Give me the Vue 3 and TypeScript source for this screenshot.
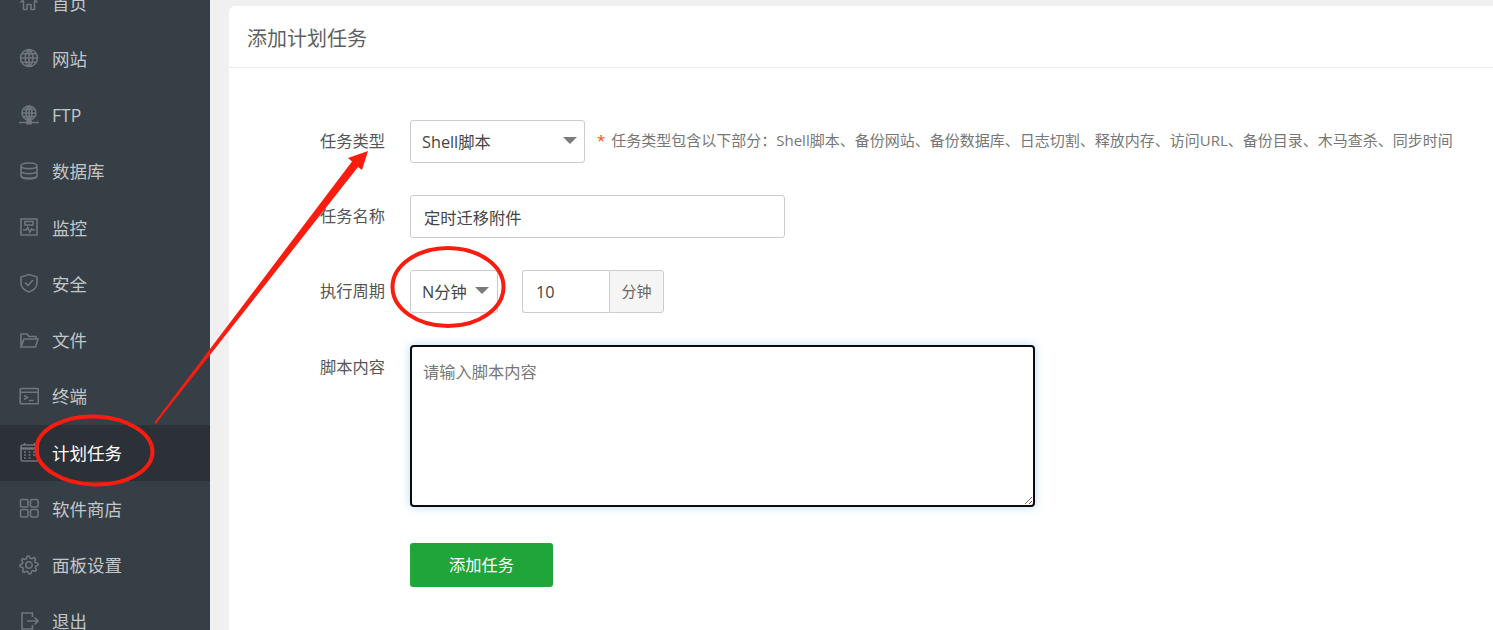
<script setup lang="ts">
const globe =
  'M10 1.5a8.5 8.5 0 1 0 0 17a8.5 8.5 0 1 0 0-17ZM1.5 10H18.5M10 1.5V18.5M3 5.8H17M3 14.2H17M10 1.5C5 5 5 15 10 18.5M10 1.5C15 5 15 15 10 18.5'

function gearPath(): string {
  const points: string[] = []
  const teeth = 8
  for (let i = 0; i < teeth * 4; i++) {
    const angle = (i / (teeth * 4)) * Math.PI * 2 - Math.PI / 16
    const radius = i % 4 < 2 ? 9 : 6.8
    points.push(`${(10 + Math.cos(angle) * radius).toFixed(2)} ${(10 + Math.sin(angle) * radius).toFixed(2)}`)
  }
  return `M${points.join('L')}ZM10 6.8a3.2 3.2 0 1 0 0 6.4a3.2 3.2 0 1 0 0-6.4Z`
}

const menu = [
  { label: '首页', icon: 'M1.5 10.5L10 2.5L18.5 10.5M4.5 8V17.5H8V12.5H12V17.5H15.5V8' },
  { label: '网站', icon: globe },
  {
    label: 'FTP',
    icon: 'M10 1a7 7 0 1 0 0 14a7 7 0 1 0 0-14ZM3 8H17M10 1V15M4.5 4.5H15.5M4.5 11.5H15.5M10 1C6 4 6 12 10 15M10 1C14 4 14 12 10 15M0 17.5H20M8 16.3H12V18.7H8Z',
  },
  {
    label: '数据库',
    icon: 'M2 5C2 1 18 1 18 5V15C18 19 2 19 2 15ZM2 5C2 8.5 18 8.5 18 5M2 10C2 13.5 18 13.5 18 10M2 14.5C2 18 18 18 18 14.5',
  },
  {
    label: '监控',
    icon: 'M2 2H18V18H2ZM6 4.5H14V8H6ZM4 13H7L8.8 10.5L10.8 15L12.8 12L14 13H16',
  },
  {
    label: '安全',
    icon: 'M10 1.5L18 4V10C18 15 14 17.5 10 19C6 17.5 2 15 2 10V4ZM6 9.5L9 12.5L14 7',
  },
  { label: '文件', icon: 'M2 17V4H8L10 6.5H17V9M2 17H16.5L19 9H5Z' },
  {
    label: '终端',
    icon: 'M2 2.5H18.5A.8.8 0 0 1 19.3 3.3V17A.8.8 0 0 1 18.5 17.8H2A.8.8 0 0 1 1.2 17V3.3A.8.8 0 0 1 2 2.5ZM1.2 6.3H19.3M5 9.5L8.5 11.5L5 13.5M10 14.5H14.5',
  },
  {
    label: '计划任务',
    icon: 'M3.5 3H17.5A1.5 1.5 0 0 1 19 4.5V17.5A1.5 1.5 0 0 1 17.5 19H3.5A1.5 1.5 0 0 1 2 17.5V4.5A1.5 1.5 0 0 1 3.5 3ZM2 6H19M2 7H19M5.5 1V3.5M15.5 1V3.5M5 10H7M9.5 10H11.5M14 10H16M5 13H7M9.5 13H11.5M14 13H16M5 16H7M9.5 16H11.5',
    active: true,
  },
  {
    label: '软件商店',
    icon: 'M3 1.5H7.5A1.5 1.5 0 0 1 9 3V7.5A1.5 1.5 0 0 1 7.5 9H3A1.5 1.5 0 0 1 1.5 7.5V3A1.5 1.5 0 0 1 3 1.5ZM13 1.5H17.5A1.5 1.5 0 0 1 19 3V7.5A1.5 1.5 0 0 1 17.5 9H13A1.5 1.5 0 0 1 11.5 7.5V3A1.5 1.5 0 0 1 13 1.5ZM3 11.5H7.5A1.5 1.5 0 0 1 9 13V17.5A1.5 1.5 0 0 1 7.5 19H3A1.5 1.5 0 0 1 1.5 17.5V13A1.5 1.5 0 0 1 3 11.5ZM13 11.5H17.5A1.5 1.5 0 0 1 19 13V17.5A1.5 1.5 0 0 1 17.5 19H13A1.5 1.5 0 0 1 11.5 17.5V13A1.5 1.5 0 0 1 13 11.5Z',
  },
  { label: '面板设置', icon: gearPath() },
  { label: '退出', icon: 'M13.5 6V2H3V18H13.5V14M8 10H19M15.5 6.5L19 10L15.5 13.5' },
]
</script>

<template>
  <div class="page">
    <aside class="sidebar">
      <a v-for="item in menu" :key="item.label" class="nav-item" :class="{ active: item.active }">
        <svg class="nav-icon" viewBox="0 0 20 20" width="20" height="20" aria-hidden="true">
          <path :d="item.icon" />
        </svg>
        <span>{{ item.label }}</span>
      </a>
    </aside>

    <main class="content">
      <section class="card">
        <header class="card-head">添加计划任务</header>
        <form class="form" @submit.prevent>
          <div class="row">
            <label class="label">任务类型</label>
            <div class="select-wrap type-select">
              <select class="control select">
                <option>Shell脚本</option>
              </select>
            </div>
            <p class="hint"><i>*</i>任务类型包含以下部分：Shell脚本、备份网站、备份数据库、日志切割、释放内存、访问URL、备份目录、木马查杀、同步时间</p>
          </div>

          <div class="row">
            <label class="label">任务名称</label>
            <input class="control name-input" value="定时迁移附件" />
          </div>

          <div class="row">
            <label class="label">执行周期</label>
            <div class="select-wrap cycle-select">
              <select class="control select">
                <option>N分钟</option>
              </select>
            </div>
            <div class="group">
              <input class="control minutes" value="10" />
              <span class="addon">分钟</span>
            </div>
          </div>

          <div class="row row-top">
            <label class="label">脚本内容</label>
            <textarea class="script" placeholder="请输入脚本内容"></textarea>
          </div>

          <div class="row row-submit">
            <span class="label"></span>
            <button class="submit" type="submit">添加任务</button>
          </div>
        </form>
      </section>
    </main>

    <svg class="annotations" viewBox="0 0 1493 630" width="1493" height="630" aria-hidden="true">
      <ellipse cx="94.5" cy="450.5" rx="58" ry="34" transform="rotate(2 94.5 450.5)" />
      <ellipse cx="448" cy="287" rx="55.5" ry="39" />
      <polygon points="154.3,422.5 155.8,423.7 358,167 362,170 368,151 348,158 352,161.5" />
    </svg>
  </div>
</template>

<style scoped>
.page {
  position: relative;
  display: flex;
  width: 1493px;
  height: 630px;
  overflow: hidden;
  background: #f0f0f0;
  font-family: "Open Sans", "Noto Sans CJK SC", sans-serif;
  color: #555;
}

.sidebar {
  flex: 0 0 210px;
  height: 660px;
  margin-top: -25px;
  background: #363e46;
}

.nav-item {
  box-sizing: border-box;
  display: flex;
  align-items: center;
  gap: 13px;
  height: 56.25px;
  padding: 0 0 2px 19px;
  font-size: 17.5px;
  color: #c3c6c9;
}

.nav-item.active {
  background: #2c3138;
  color: #fff;
}

.nav-icon {
  flex: none;
  fill: none;
  stroke: #70767b;
  stroke-width: 1.6;
}

.content {
  flex: 1;
  min-width: 0;
  padding: 6px 0 0 19px;
}

.card {
  height: 700px;
  background: #fff;
  border-radius: 6px 0 0 0;
}

.card-head {
  height: 61px;
  padding-left: 18px;
  border-bottom: 1px solid #ececec;
  font-size: 20px;
  line-height: 65px;
  color: #5f5f5f;
}

.form {
  display: flex;
  flex-direction: column;
  gap: 32px;
  padding-top: 52px;
}

.row {
  display: flex;
  align-items: center;
  height: 43px;
}

.row-top {
  align-items: flex-start;
  height: 162px;
}

.row-submit {
  height: 44px;
  margin-top: 4px;
}

.label {
  flex: none;
  width: 156px;
  margin-right: 25px;
  font-size: 16.25px;
  line-height: 43px;
  text-align: right;
  color: #555;
}

.row-top .label {
  line-height: 45px;
}

.control {
  box-sizing: border-box;
  height: 43px;
  border: 1px solid #ccc;
  border-radius: 3px;
  background: #fff;
  font: inherit;
  font-size: 16.25px;
  color: #444;
  outline: none;
}

.select-wrap {
  position: relative;
  flex: none;
}

.select-wrap::after {
  content: "";
  position: absolute;
  top: 17px;
  border-left: 7px solid transparent;
  border-right: 7px solid transparent;
  border-top: 7px solid #7b7b7b;
  pointer-events: none;
}

.type-select {
  width: 175px;
}

.type-select::after {
  right: 8px;
}

.cycle-select {
  width: 88px;
}

.cycle-select::after {
  right: 9px;
}

.select {
  display: block;
  width: 100%;
  padding: 0 0 0 11px;
  appearance: none;
}

.hint {
  margin: 0 0 0 12px;
  padding-bottom: 4px;
  font-size: 15px;
  line-height: 20px;
  white-space: nowrap;
  color: #777;
}

.hint i {
  margin-right: 6px;
  font-style: normal;
  color: #e8500d;
}

.name-input {
  width: 375px;
  padding: 0 13px;
}

.group {
  display: flex;
  margin-left: 24px;
}

.minutes {
  width: 87px;
  padding: 0 13px;
  border-right: 0;
  border-radius: 3px 0 0 3px;
}

.addon {
  box-sizing: border-box;
  width: 55px;
  height: 43px;
  border: 1px solid #ccc;
  border-radius: 0 3px 3px 0;
  background: #f5f5f5;
  font-size: 15px;
  line-height: 41px;
  text-align: center;
  color: #666;
}

.script {
  box-sizing: border-box;
  width: 625px;
  height: 162px;
  padding: 13px 11px;
  border: 2px solid #0c0c0c;
  border-radius: 4px;
  background: #fff;
  box-shadow: 0 0 10px rgba(102, 175, 233, 0.45);
  font: inherit;
  font-size: 16.25px;
  line-height: 24px;
  color: #444;
  outline: none;
}

.script::placeholder {
  color: #777;
  opacity: 1;
}

.submit {
  width: 143px;
  height: 44px;
  padding: 0 0 2px;
  border: 0;
  border-radius: 3px;
  background: #20a53a;
  font: inherit;
  font-size: 16.25px;
  color: #fff;
}

.annotations {
  position: absolute;
  top: 0;
  left: 0;
  pointer-events: none;
}

.annotations ellipse {
  fill: none;
  stroke: #fb1c10;
  stroke-width: 4;
}

.annotations polygon {
  fill: #fb1c10;
}
</style>
